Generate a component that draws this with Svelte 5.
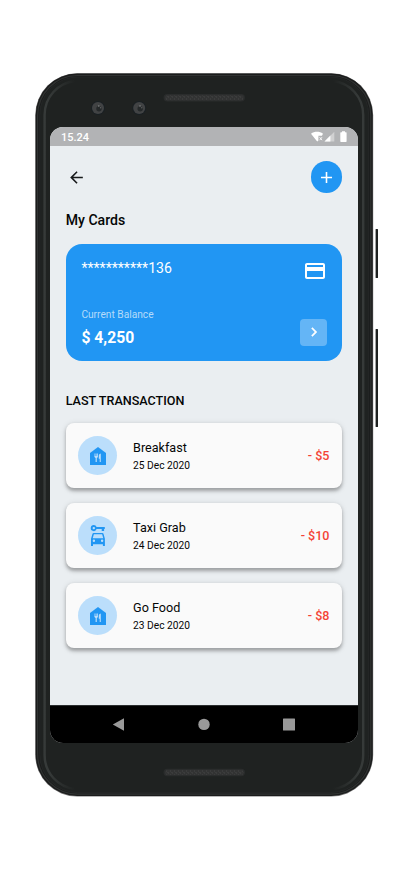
<script>
  const transactions = [
    { name: 'Breakfast', date: '25 Dec 2020', amount: '- $5', icon: 'food' },
    { name: 'Taxi Grab', date: '24 Dec 2020', amount: '- $10', icon: 'taxi' },
    { name: 'Go Food', date: '23 Dec 2020', amount: '- $8', icon: 'food' }
  ];
</script>

<div class="page">
  <svg class="device" viewBox="0 0 412 870" width="412" height="870" aria-hidden="true">
    <defs>
      <linearGradient id="ring" x1="0" y1="0" x2="1" y2="0">
        <stop offset="0" stop-color="#363a39" />
        <stop offset="0.15" stop-color="#363a39" />
        <stop offset="1" stop-color="#1f2221" />
      </linearGradient>
      <linearGradient id="ringRight" x1="1" y1="0" x2="0" y2="0">
        <stop offset="0" stop-color="#363a39" />
        <stop offset="0.15" stop-color="#363a39" />
        <stop offset="1" stop-color="#1f2221" />
      </linearGradient>
      <pattern id="mesh" width="4" height="4" patternUnits="userSpaceOnUse">
        <rect width="4" height="4" fill="#323333" />
        <path d="M0 1h1M2 3h1M3 0h1" stroke="#434444" />
      </pattern>
    </defs>
    <rect x="375.6" y="229" width="2.4" height="49" rx=".5" fill="#1f2221" />
    <rect x="375.6" y="329" width="2.4" height="98" rx=".5" fill="#1f2221" />
    <rect x="35.2" y="73.2" width="338" height="723.4" rx="42" fill="#777" />
    <rect x="35.7" y="73.6" width="337" height="722.4" rx="41.5" fill="#1b1c1c" />
    <rect x="37.6" y="75.5" width="333.2" height="718.6" rx="40" fill="none" stroke="#303332" stroke-width="1.2" />
    <rect x="39.7" y="77" width="329" height="715.6" rx="38" fill="#1f2221" stroke="#272a29" stroke-width=".8" />
    <path d="M75 81C58 83 44.6 97 44.6 115V755C44.6 773 58 787 75 789" fill="none" stroke="url(#ring)" stroke-width="2.4" />
    <path d="M333 81C350 83 363.2 97 363.2 115V755C363.2 773 350 787 333 789" fill="none" stroke="url(#ringRight)" stroke-width="2.4" />
    <g>
      <rect x="163.5" y="94" width="81.5" height="7.5" rx="3.7" fill="#2a2c2c" />
      <rect x="165" y="95.2" width="78.5" height="5" rx="2.5" fill="url(#mesh)" />
      <rect x="163.5" y="768.7" width="81.5" height="7.5" rx="3.7" fill="#2a2c2c" />
      <rect x="165" y="769.9" width="78.5" height="5" rx="2.5" fill="url(#mesh)" />
    </g>
    {#each [98, 139.2] as cx}
      <circle {cx} cy="108" r="7" fill="#1a2024" />
      <circle {cx} cy="108" r="6" fill="#414344" />
      <circle cx={cx + 1} cy="108.8" r="2.7" fill="#25292a" />
      <circle cx={cx + 0.8} cy="106" r=".8" fill="#858788" />
      <circle cx={cx + 2.6} cy="107.7" r=".7" fill="#606263" />
    {/each}
  </svg>

  <main class="screen">
    <div class="status">
      <span>15.24</span>
      <svg width="36" height="12" viewBox="0 0 36 12" fill="#fff">
        <path d="M0 2.7C3.5.1 8.5.1 12 2.7L10.9 4.7H7.4V9.4L6.2 10.6Z" />
        <path d="M8.6 6.2l2.4 3M11 6.2 8.6 9.2" stroke="#fff" stroke-width=".9" />
        <path d="M13.5 10.5 23.3.7V10.5Z" opacity=".4" />
        <path d="M13.5 10.5 19.4 4.6V10.5Z" />
        <path d="M30 1.2h1V.3h3v.9h1q.6 0 .6.6v8.4q0 .7-.6.7h-5q-.7 0-.7-.7V1.8q0-.6.7-.6Z" />
      </svg>
    </div>

    <div class="content">
      <header>
        <svg class="back" width="19" height="19" viewBox="0 0 24 24"><path fill="#17191a" d="M20 11H7.83l5.59-5.59L12 4l-8 8 8 8 1.41-1.41L7.83 13H20v-2z" /></svg>
        <button class="add" aria-label="Add card">
          <svg width="19" height="19" viewBox="0 0 24 24"><path fill="#fff" d="M19 13h-6v6h-2v-6H5v-2h6V5h2v6h6v2z" /></svg>
        </button>
      </header>

      <h1>My Cards</h1>

      <section class="card">
        <div class="row">
          <span class="number">***********136</span>
          <svg class="credit" width="24" height="24" viewBox="0 0 24 24"><path fill="#fff" d="M20 4H4c-1.11 0-1.99.89-1.99 2L2 18c0 1.11.89 2 2 2h16c1.11 0 2-.89 2-2V6c0-1.11-.89-2-2-2zm0 14H4v-6h16v6zm0-10H4V6h16v2z" /></svg>
        </div>
        <div class="row bottom">
          <div>
            <div class="label">Current Balance</div>
            <div class="balance">$ 4,250</div>
          </div>
          <button class="next" aria-label="Card details">
            <svg width="18" height="18" viewBox="0 0 24 24"><path fill="#fff" stroke="#fff" stroke-width=".5" d="M10 6 8.59 7.41 13.17 12l-4.58 4.59L10 18l6-6z" /></svg>
          </button>
        </div>
      </section>

      <h2>LAST TRANSACTION</h2>

      <div class="list">
        {#each transactions as t}
          <article>
            <div class="avatar">
              {#if t.icon === 'food'}
                <svg width="16" height="18" viewBox="0 0 16 18">
                  <path fill="#2196f3" d="M8 0 16 5.9V18H0V5.9Z" />
                  <path fill="none" stroke="#bbdefb" stroke-width=".8" d="M4.9 6.5v3.2M6.2 6.5v3.2M7.5 6.5v3.2" />
                  <path fill="#bbdefb" d="M4.5 9h3.4q0 1.8-1.1 2.1V15H5.6v-3.9Q4.5 10.8 4.5 9ZM10.8 6.4V15H9.7v-3.2H8.8V8.6q0-1.7 2-2.2Z" />
                </svg>
              {:else}
                <svg width="16" height="22" viewBox="0 0 16 22" fill="#2196f3">
                  <path fill-rule="evenodd" d="M3.8.1a3 3 0 0 1 2.8 1.9h8.2v2h-.7v2h-2.4V4H6.6A3 3 0 1 1 3.8.1Zm0 1.8a1.2 1.2 0 1 0 0 2.4 1.2 1.2 0 0 0 0-2.4Z" />
                  <path fill-rule="evenodd" d="M3.6 8h8.8q.8 0 1.1.8l1.4 5v7.2h-2v-1.7H3v1.7H1v-7.2l1.5-5Q2.8 8 3.6 8Zm.3 1.2-1.2 4h10.6l-1.2-4ZM3.9 14.6a1.2 1.2 0 1 0 0 2.4 1.2 1.2 0 0 0 0-2.4Zm8.2 0a1.2 1.2 0 1 0 0 2.4 1.2 1.2 0 0 0 0-2.4Z" />
                </svg>
              {/if}
            </div>
            <div class="info">
              <div class="name">{t.name}</div>
              <div class="date">{t.date}</div>
            </div>
            <div class="amount">{t.amount}</div>
          </article>
        {/each}
      </div>
    </div>

    <nav>
      <svg width="308" height="37" viewBox="0 0 308 37" fill="#999">
        <path d="M62.8 18.4 74 12.2V24.8Z" />
        <circle cx="154" cy="18.4" r="5.7" />
        <rect x="233" y="12.4" width="12" height="12" rx=".5" />
      </svg>
    </nav>
  </main>
</div>

<style>
  :global(body) {
    background: #fff;
  }
  .page {
    position: relative;
    box-sizing: border-box;
    width: 412px;
    height: 870px;
    padding: 127px 54px 127px 50px;
    font-family: Roboto, sans-serif;
    color: #050606;
  }
  .device {
    position: absolute;
    inset: 0;
  }
  .screen {
    position: relative;
    display: flex;
    flex-direction: column;
    width: 308px;
    height: 616px;
    border-radius: 13px;
    overflow: hidden;
    background: #eaeef1;
  }
  .status {
    display: flex;
    align-items: center;
    justify-content: space-between;
    box-sizing: border-box;
    height: 19px;
    padding: 1px 11.2px 0 11px;
    background: #b2b3b5;
    color: #fff;
    font-size: 11px;
    font-weight: 500;
  }
  .content {
    flex: 1;
    padding: 15.5px 15.8px 0 15.7px;
  }
  header {
    display: flex;
    align-items: center;
    justify-content: space-between;
    height: 31px;
  }
  .back {
    margin-left: 1px;
  }
  button {
    display: flex;
    align-items: center;
    justify-content: center;
    padding: 0;
    border: 0;
  }
  .add {
    width: 31.4px;
    height: 31.4px;
    border-radius: 50%;
    background: #2196f3;
  }
  h1,
  h2 {
    margin: 0;
    font-weight: 500;
  }
  h1 {
    margin-top: 18.5px;
    font-size: 14.1px;
    line-height: 18px;
  }
  .card {
    display: flex;
    flex-direction: column;
    justify-content: space-between;
    box-sizing: border-box;
    height: 117.3px;
    margin-top: 15px;
    padding: 15px 15.2px 15.5px 15.7px;
    border-radius: 16px;
    background: #2196f3;
    color: #fff;
  }
  .row {
    display: flex;
    justify-content: space-between;
  }
  .number {
    font-size: 14.1px;
    line-height: 19px;
  }
  .bottom {
    align-items: flex-end;
  }
  .label {
    font-size: 10.2px;
    line-height: 14px;
    color: #b5dbfa;
  }
  .balance {
    margin-top: 7px;
    font-size: 15.7px;
    font-weight: 700;
    line-height: 17px;
  }
  .next {
    width: 27px;
    height: 27px;
    border-radius: 4px;
    background: #64b5f6;
  }
  h2 {
    margin-top: 30.7px;
    font-size: 12.6px;
    line-height: 18px;
  }
  .list {
    display: flex;
    flex-direction: column;
    gap: 15.7px;
    margin-top: 13.5px;
  }
  article {
    display: flex;
    align-items: center;
    box-sizing: border-box;
    height: 64.3px;
    padding: 0 12.7px 0 12.3px;
    border-radius: 8px;
    background: #fafafa;
    box-shadow: 0 2.4px 3.5px rgba(0, 0, 0, 0.26), 0 1.5px 6px rgba(0, 0, 0, 0.12);
  }
  .avatar {
    display: flex;
    align-items: center;
    justify-content: center;
    width: 39.3px;
    height: 39.3px;
    border-radius: 50%;
    background: #bbdefb;
  }
  .info {
    flex: 1;
    margin-left: 15.8px;
    padding-top: 2px;
  }
  .name {
    font-size: 12.6px;
    line-height: 16px;
  }
  .date {
    margin-top: 3px;
    font-size: 10.2px;
    line-height: 14px;
  }
  .amount {
    font-size: 12.6px;
    font-weight: 500;
    color: #f44336;
  }
  nav {
    height: 37px;
    border-top: 1px solid #2b2e2f;
    background: #000;
  }
</style>
